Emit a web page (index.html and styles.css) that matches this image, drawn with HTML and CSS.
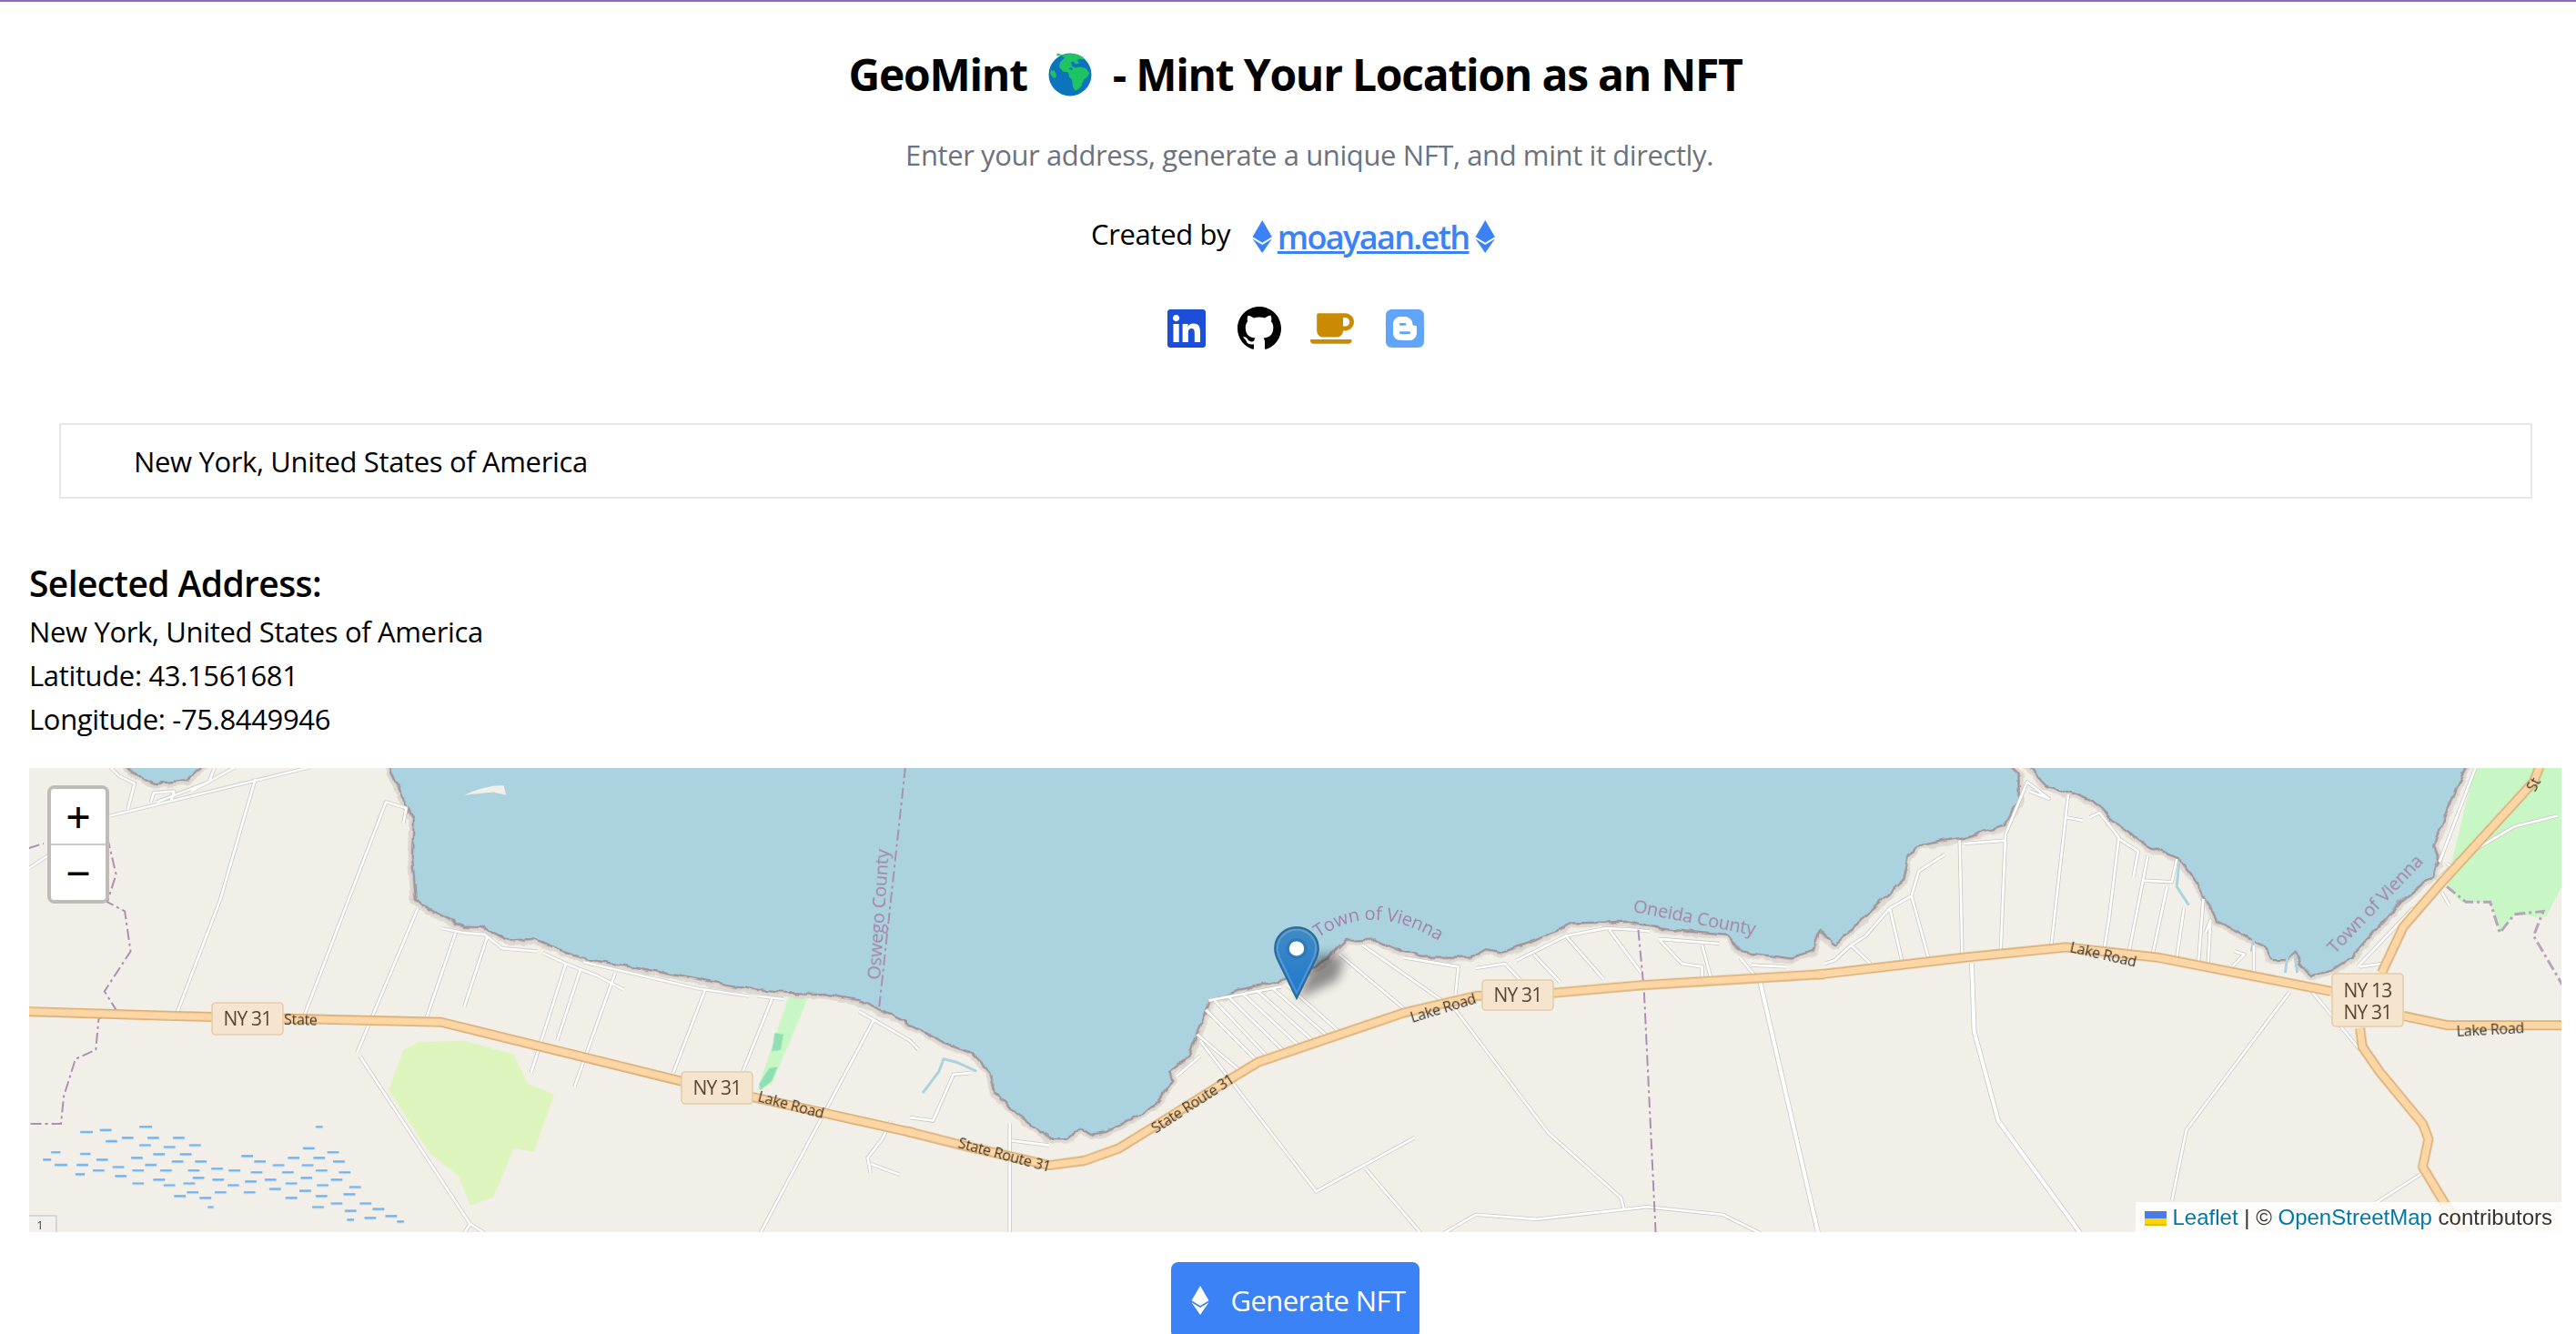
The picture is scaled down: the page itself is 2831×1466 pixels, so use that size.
FILE: index.html
```html
<!DOCTYPE html>
<html lang="en">
<head>
<meta charset="utf-8">
<title>GeoMint</title>
<link rel="stylesheet" href="styles.css">
</head>
<body>
<div class="page">
  <header class="hero">
    <h1 class="title">GeoMint
      <svg class="globe" viewBox="0 0 48 48" aria-hidden="true">
        <circle cx="24" cy="24" r="23.5" fill="#0b74bd"/>
        <path fill="#1ec463" d="M17 2.5c3-1.5 10-2 14-.7 3 1 7 2.6 9 4.7l-3 1-3-1-2 2 2 3-4 1-2-3-3 1 1 4 4 2 5-1 7 2 3 5-2 4-4 3-2 6-4 5-4 1-2-5-1-7-3-3-1-5-6-1-4-5 1-5 5-5-4-3-5 1 1-3z"/>
        <path fill="#1ec463" d="M3 19l4 1 2 4-1 4-3-1-3-4z"/>
        <path fill="#0b74bd" d="M24 16l3 1-1 2-3-1zM38 32l2 1-2 4-1-2z"/>
      </svg>
      - Mint Your Location as an NFT</h1>
    <p class="subtitle">Enter your address, generate a unique NFT, and mint it directly.</p>
    <div class="credit">
      <span class="credit-label">Created by</span>
      <svg class="eth" viewBox="0 0 320 512" aria-hidden="true"><path d="M311.9 260.8L160 353.6 8 260.8 160 0l151.9 260.8zM160 383.4L8 290.6 160 512l152-221.4-152 92.8z"/></svg>
      <a class="credit-link" href="#">moayaan.eth</a>
      <svg class="eth" viewBox="0 0 320 512" aria-hidden="true"><path d="M311.9 260.8L160 353.6 8 260.8 160 0l151.9 260.8zM160 383.4L8 290.6 160 512l152-221.4-152 92.8z"/></svg>
    </div>
    <nav class="socials">
      <svg class="social linkedin" viewBox="0 0 448 512"><path d="M416 32H31.9C14.3 32 0 46.5 0 64.3v383.4C0 465.5 14.3 480 31.9 480H416c17.6 0 32-14.5 32-32.3V64.3c0-17.8-14.4-32.3-32-32.3zM135.4 416H69V202.2h66.5V416zm-33.2-243c-21.3 0-38.5-17.3-38.5-38.5S80.9 96 102.2 96c21.2 0 38.5 17.3 38.5 38.5 0 21.3-17.2 38.5-38.5 38.5zm282.1 243h-66.4V312c0-24.8-.5-56.7-34.5-56.7-34.6 0-39.9 27-39.9 54.9V416h-66.4V202.2h63.7v29.2h.9c8.9-16.8 30.6-34.5 62.9-34.5 67.2 0 79.7 44.3 79.7 101.9V416z"/></svg>
      <svg class="social github" viewBox="0 0 16 16"><path d="M8 0C3.58 0 0 3.58 0 8c0 3.54 2.29 6.53 5.47 7.59.4.07.55-.17.55-.38 0-.19-.01-.82-.01-1.49-2.01.37-2.53-.49-2.69-.94-.09-.23-.48-.94-.82-1.13-.28-.15-.68-.52-.01-.53.63-.01 1.08.58 1.23.82.72 1.21 1.87.87 2.33.66.07-.52.28-.87.51-1.07-1.78-.2-3.64-.89-3.64-3.95 0-.87.31-1.59.82-2.15-.08-.2-.36-1.02.08-2.12 0 0 .67-.21 2.2.82.64-.18 1.32-.27 2-.27.68 0 1.36.09 2 .27 1.53-1.04 2.2-.82 2.2-.82.44 1.1.16 1.92.08 2.12.51.56.82 1.27.82 2.15 0 3.07-1.87 3.75-3.65 3.95.29.25.54.73.54 1.48 0 1.07-.01 1.93-.01 2.2 0 .21.15.46.55.38A8.013 8.013 0 0016 8c0-4.42-3.58-8-8-8z"/></svg>
      <svg class="social coffee" viewBox="0 0 640 512"><path d="M192 384h192c53 0 96-43 96-96h32c70.6 0 128-57.4 128-128S582.6 32 512 32H120c-13.3 0-24 10.7-24 24v232c0 53 43 96 96 96zM512 96c35.3 0 64 28.7 64 64s-28.7 64-64 64h-32V96h32zm47.7 384H48.3c-47.6 0-61-64-36-64h583.3c25 0 11.8 64-35.9 64z"/></svg>
      <svg class="social blogger" viewBox="0 0 448 512"><path d="M162.4 196c4.8-4.9 6.2-5.1 36.4-5.1 27.2 0 28.1.1 32.1 2.1 5.8 2.9 8.3 7 8.3 13.6 0 5.9-2.4 10-7.6 13.4-2.8 1.8-4.5 1.9-31.1 2.1-16.4.1-29.5-.2-31.5-.8-10.3-2.9-14.1-17.7-6.6-25.3zm61.4 94.5c-53.9 0-55.8.2-60.2 4.1-3.5 3.1-5.7 9.4-5.1 13.9.7 4.7 4.8 10.1 9.2 12 2.2 1 14.1 1.7 56.3 1.2l47.9-.6 9.2-1.5c9-5.1 10.5-17.4 3.1-24.4-5.3-4.7-5-4.7-60.4-4.7zm223.4 130.1c-3.5 28.4-23 50.4-51.1 57.5-7.2 1.8-9.7 1.9-172.9 1.8-157.8 0-165.9-.1-172-1.8-8.4-2.2-15.6-5.5-22.3-10-5.6-3.8-13.9-11.8-17-16.4-3.8-5.6-8.2-15.3-10-22C.1 423 0 420.3 0 256.3 0 93.2 0 89.7 1.8 82.6 8.1 57.9 27.7 39 53 33.4c7.3-1.6 332.1-1.9 340-.3 21.2 4.3 37.9 17.1 47.6 36.4 7.7 15.3 7-1.5 7.3 180.6.2 115.8 0 164.5-.7 170.5zm-85.4-185.2c-1.1-5-4.2-9.6-7.7-11.5-1.1-.6-8-1.3-15.5-1.7-12.4-.6-13.8-.8-17.8-3.1-6.2-3.6-7.9-7.6-8-18.3 0-20.4-8.5-39.4-25.3-56.5-12-12.2-25.3-20.5-40.6-25.1-3.6-1.1-11.8-1.5-39.2-1.8-42.9-.5-52.5.4-67.1 6.2-27 10.7-46.3 33.4-53.4 62.4-1.3 5.4-1.6 14.2-1.9 64.3-.4 62.8 0 72.1 4 84.5 9.7 30.7 37.1 53.4 64.6 58.4 9.2 1.7 122.2 2.1 133.7.5 20.1-2.7 35.9-10.8 50.7-25.9 10.7-10.9 17.4-22.8 21.8-38.5 3.2-10.9 2.9-88.4 1.7-93.9z"/></svg>
    </nav>
  </header>

  <div class="search-box">New York, United States of America</div>

  <section class="selected">
    <h2 class="selected-title">Selected Address:</h2>
    <p class="selected-line">New York, United States of America</p>
    <p class="selected-line">Latitude: 43.1561681</p>
    <p class="selected-line">Longitude: -75.8449946</p>
  </section>

  <div class="map">
    <svg class="map-canvas" viewBox="32 845 2783 510">
      <defs>
        <linearGradient id="pin" x1="0" y1="0" x2="0" y2="1">
          <stop offset="0" stop-color="#3f8bc4"/>
          <stop offset="1" stop-color="#1f78cf"/>
        </linearGradient>
        <filter id="soft" x="-50%" y="-50%" width="200%" height="200%"><feGaussianBlur stdDeviation="6"/></filter>
        <filter id="rough" filterUnits="userSpaceOnUse" x="32" y="845" width="2783" height="510">
          <feTurbulence type="fractalNoise" baseFrequency=".07" numOctaves="2" seed="4"/>
          <feDisplacementMap in="SourceGraphic" scale="7" xChannelSelector="R" yChannelSelector="G"/>
        </filter>

        <g id="water">
          <g class="zone-a">
            <path class="nss" d="M670,0 L690,90 L715,180 L712,300 L718,440 L730,460 L760,490 L800,525 L830,525 L880,575 L920,568 L970,605 L1020,635 L1100,660 L1180,690 L1260,720 L1340,740 L1420,745 L1480,765 L1530,810 L1575,850 L1575,0 Z"/>
            <path class="nss" d="M215,0 L240,40 L270,62 L320,50 L345,12 L350,0 Z"/>
          </g>
          <g class="zone-b">
            <path class="nss" d="M-5,845 L30,870 L60,905 L110,940 L140,1000 L148,1070 L190,1140 L240,1215 L270,1215 L295,1180 L310,1200 L340,1190 L380,1150 L420,1110 L450,1030 L445,1000 L480,950 L495,870 L515,770 L560,735 L640,700 L700,660 L750,570 L800,565 L840,600 L880,625 L965,625 L995,600 L1020,610 L1080,570 L1140,515 L1240,510 L1300,535 L1410,555 L1435,610 L1520,630 L1555,605 L1565,540 L1575,535 L1575,0 L-5,0 Z"/>
          </g>
          <g class="zone-c">
            <path class="nss" d="M-5,535 L30,585 L60,540 L110,470 L170,380 L180,300 L200,265 L300,235 L380,200 L410,120 L410,40 L385,0 L-5,0 Z"/>
            <path class="nss" d="M430,0 L470,70 L530,95 L580,130 L600,170 L680,265 L745,305 L790,400 L825,510 L880,555 L925,590 L940,635 L965,635 L985,605 L1000,650 L1020,685 L1060,670 L1100,630 L1200,450 L1270,360 L1280,320 L1270,265 L1340,0 Z"/>
          </g>
        </g>

        <g id="minor">
          <g class="zone-a">
            <path class="nss" d="M190,12 L205,40 L232,65 L220,150 M260,125 L265,95 L300,90 L295,120 M270,125 L360,60 L370,12 M330,90 L405,12 M190,170 L535,12 M305,810 L380,440 L440,50 M525,815 L665,125 L700,145 L695,195 M615,940 L720,470 M620,950 L810,1495 L835,1525 M800,1525 L810,1495 M735,825 L785,550 M760,535 L800,550 L835,555 L865,600 L925,610 M800,790 L840,560 M915,1005 L975,650 M935,615 L975,650 L1030,690 L1075,735 M960,900 L1000,670 M990,1050 L1060,680 M1005,645 L1200,730 L1290,755 M1160,1005 L1215,735 M1280,1000 L1330,765 M1305,755 L1350,765 M1310,1525 L1505,835 M1480,805 L1568,900 M1500,1330 L1495,1280 L1520,1220 L1535,1160 M1500,1300 L1550,1335 M50,340 L90,290"/>
          </g>
          <g class="zone-b">
            <path class="nss" d="M0,1150 L40,1160 L75,1010 L105,1005 M0,900 L15,930 M525,770 L620,960 M550,760 L650,945 M575,750 L675,925 M600,740 L700,910 M625,730 L725,895 M650,720 L745,880 M510,800 L600,970 M495,880 L570,1000 M515,770 L640,725 M500,900 L700,1390 L870,1215 M785,1315 L880,1525 M740,620 L860,810 M780,590 L940,800 L1100,1200 L1225,1410 L1230,1445 M920,1525 L975,1465 L1080,1480 L1270,1440 L1400,1465 L1465,1525 M172,1525 L172,1170 M175,1225 L240,1240 M460,1015 L500,950 M850,630 L945,660 L940,750 M975,665 L1025,650 L1060,720 M1045,640 L1130,560 L1200,535 L1250,540 L1275,545 M1130,560 L1195,700 M1075,620 L1120,710 M1205,540 L1260,680 M1290,570 L1395,585 M1290,570 L1330,650 L1365,660 L1365,700 M1365,590 L1380,695 M1430,630 L1465,710 M1450,655 L1510,660"/>
            <path class="nss wide" d="M1465,710 L1565,1525"/>
          </g>
          <g class="zone-c">
            <path class="nss" d="M295,620 L290,250 M300,260 L385,250 M375,610 L385,230 L430,60 L475,115 L435,90 M480,590 L515,100 M510,175 L545,185 M560,175 L580,160 L620,240 L600,500 L590,600 M620,245 L660,285 L650,370 M680,300 L670,380 L730,385 L740,310 M670,380 L640,620 M720,400 L690,620 M755,470 L740,630 M795,440 L785,650 M800,550 L810,510 L805,650 M860,610 L880,620 L855,660 M900,590 L900,680 M105,650 L65,590 L30,640 L10,650 M170,640 L145,470 L190,430 L225,630 M145,470 L95,560 L65,590 M190,430 L205,350 L260,295 M975,740 L760,1190 L730,1420 M1115,660 L1230,470 M1120,660 L1165,650 M1285,320 L1360,12 M1300,325 L1310,335 L1285,370 M1290,420 L1305,460 M1020,740 L1120,930 M1245,1335 L1150,1430 M1315,320 L1440,205 L1530,170"/>
            <path class="nss wide" d="M315,650 L320,870 L370,1160 L540,1525"/>
          </g>
        </g>

        <g id="major">
          <g class="zone-a">
            <path class="nss" d="M40,805 L300,820 L760,840 L1170,1030 L1575,1200"/>
          </g>
          <g class="zone-b">
            <path class="nss" d="M-5,1195 L90,1240 L240,1305 L300,1290 L360,1250 L420,1180 L530,1050 L600,970 L850,810 L975,755 L1110,745 L1260,720 L1575,684"/>
          </g>
          <g class="zone-c">
            <path class="nss" d="M-5,686 L300,630 L510,597 L700,630 L1060,740 M1210,820 L1300,850 L1545,850 M1165,680 L1210,530 L1290,385 L1480,60 L1495,0 M1120,860 L1125,920 L1160,1000 L1250,1170 L1262,1220 L1250,1310 L1300,1440 L1345,1540"/>
          </g>
        </g>

        <path id="vienna-curve" d="M1449 1032 Q1510 988 1589 1040"/>
      </defs>

      <rect class="land" x="32" y="845" width="2783" height="510"/>

      <g class="tiles">
        <g class="zone-a">
          <path class="park" d="M695,930 L720,905 L800,900 L885,945 L910,1040 L955,1075 L920,1260 L885,1250 L850,1410 L810,1435 L790,1340 L740,1265 L670,1060 Z"/>
          <path class="forest" d="M1360,750 L1395,750 L1330,1040 L1305,1060 Z"/>
          <path class="forest-dark" d="M1335,875 L1350,880 L1345,930 L1330,935 Z M1325,990 L1340,985 L1330,1030 L1310,1062 L1308,1040 Z"/>
        </g>
        <g class="zone-c">
          <path class="forest" d="M1360,0 L1545,0 L1545,380 L1505,500 L1440,490 L1410,550 L1390,450 L1330,450 L1300,400 L1310,320 Z"/>
        </g>

        <g filter="url(#rough)">
          <use href="#water" class="shore-halo"/>
          <use href="#water" class="shore-line"/>
          <use href="#water" class="water-fill"/>
        </g>

        <g class="zone-a"><path class="island nss" d="M800,103 C820,85 840,72 868,72 L872,103 L850,93 Z"/></g>
        <g class="zone-b"><path class="inlet nss" d="M22,1070 L50,1000 L58,960 L80,970 L115,1000"/></g>
        <g class="zone-c"><path class="inlet nss" d="M745,320 L740,400 L765,460 M900,570 L895,610 M970,620 L965,680 M985,620 L990,680"/></g>

        <use href="#minor" class="minor-casing"/>
        <use href="#minor" class="minor-fill"/>

        <g class="zone-a"><path class="boundary nss" d="M50,275 L75,260 M185,240 L200,360 L185,450 L215,480 L225,610 L180,740 L200,800 L170,830 L165,930 L130,960 L110,1080 L105,1170 L50,1170 M1560,12 L1515,790"/></g>
        <g class="zone-b"><path class="boundary nss" d="M1255,540 L1265,740 L1285,1525"/></g>
        <g class="zone-c"><path class="boundary-thick nss" d="M1300,400 L1340,450 L1390,450 L1410,550 L1440,490 L1500,480 L1480,560 L1540,720"/></g>

        <use href="#major" class="major-casing"/>
        <use href="#major" class="major-fill"/>

        <g class="zone-a"><path class="wet nss" d="M138,1197h22M172,1191h20M240,1180h22M182,1227h20M210,1216h20M254,1216h20M298,1216h20M240,1240h20M282,1246h20M326,1240h20M88,1263h16M138,1268h18M166,1287h20M74,1287h14M94,1304h22M132,1304h20M194,1311h20M226,1281h20M250,1304h20M264,1269h20M310,1269h20M296,1293h20M336,1293h20M160,1322h20M130,1334h16M198,1340h20M228,1322h20M276,1322h20M324,1322h20M364,1316h20M394,1322h20M432,1328h20M486,1328h20M544,1322h20M584,1328h20M416,1275h20M438,1293h20M470,1305h20M520,1305h20M496,1281h20M540,1281h20M564,1263h20M574,1293h20M522,1250h20M544,1180h12M228,1364h20M264,1352h20M282,1370h20M316,1364h20M332,1346h20M366,1352h20M392,1370h20M422,1358h20M456,1352h20M492,1364h20M518,1346h20M570,1352h20M546,1370h20M602,1376h20M464,1382h20M516,1388h20M544,1405h20M592,1399h20M420,1393h20M370,1393h20M322,1393h20M300,1405h20M344,1411h20M492,1411h20M358,1441h10M538,1441h20M570,1429h20M620,1429h20M594,1453h20M642,1447h20M628,1476h20M664,1470h20M598,1482h12M684,1488h12"/></g>
      </g>

      <rect class="scale-stub" x="24" y="1337" width="38" height="30" rx="2"/>
      <text class="stub-text" x="44" y="1352">1</text>

      <g class="labels">
        <text class="road" transform="translate(312 1127) rotate(1)">State</text>
        <text class="road" transform="translate(832 1211) rotate(15)">Lake Road</text>
        <text class="road" transform="translate(1052 1262) rotate(15)">State Route 31</text>
        <text class="road" transform="translate(1270 1247) rotate(-33)">State Route 31</text>
        <text class="road" transform="translate(1552 1125) rotate(-17)">Lake Road</text>
        <text class="road" transform="translate(2274 1047) rotate(13)">Lake Road</text>
        <text class="road" transform="translate(2700 1140) rotate(-3)">Lake Road</text>
        <text class="road" transform="translate(2786 872) rotate(-62)">St</text>

        <text class="admin"><textPath href="#vienna-curve">Town of Vienna</textPath></text>
        <text class="admin" transform="translate(1794 1003) rotate(11)">Oneida County</text>
        <text class="admin" transform="translate(967 1078) rotate(-86)">Oswego County</text>
        <text class="admin" transform="translate(2566 1050) rotate(-46)">Town of Vienna</text>

        <rect class="shield" x="233" y="1103" width="78" height="35" rx="4"/>
        <text class="shield-text" x="272" y="1128">NY 31</text>
        <rect class="shield" x="749" y="1179" width="78" height="35" rx="4"/>
        <text class="shield-text" x="788" y="1204">NY 31</text>
        <rect class="shield" x="1629" y="1078" width="78" height="33" rx="4"/>
        <text class="shield-text" x="1668" y="1102">NY 31</text>
        <rect class="shield" x="2563" y="1071" width="78" height="58" rx="4"/>
        <text class="shield-text" x="2602" y="1097">NY 13</text>
        <text class="shield-text" x="2602" y="1121">NY 31</text>
      </g>

      <path class="pin-shadow" d="M1425 1099 L1448 1050 L1478 1052 L1470 1078 Z" filter="url(#soft)"/>
      <g transform="translate(1400 1019) scale(2 1.951)">
        <path d="M12.5 .6C5.9 .6 .6 5.8 .6 12.5c0 2.6 1 5.3 2.2 7.7L12.5 40.4l9.7-20.2c1.2-2.4 2.2-5.1 2.2-7.7C24.4 5.8 19.1 .6 12.5 .6z" fill="url(#pin)" stroke="#2e6c97" stroke-width="1.1"/>
        <path d="M12.5 1.9C6.7 1.9 1.900 6.6 1.900 12.5c0 2.3 .9 4.7 2 7l8.6 18 8.6-18c1.1-2.3 2-4.7 2-7 0-5.900-4.800-10.600-10.600-10.600z" fill="none" stroke="#fff" stroke-opacity=".18" stroke-width="1"/>
        <circle cx="12.500" cy="12.500" r="5.800" fill="#2a6da3" fill-opacity=".45"/>
        <circle cx="12.500" cy="12.500" r="4.100" fill="#fff"/>
      </g>
    </svg>

    <div class="zoom-control">
      <a class="zoom-btn zoom-in" href="#">+</a>
      <a class="zoom-btn" href="#">−</a>
    </div>

    <div class="attribution"><svg class="flag" viewBox="0 0 12 8"><path fill="#4C7BE1" d="M0 0h12v4H0z"/><path fill="#FFD500" d="M0 4h12v3H0z"/><path fill="#E0BC00" d="M0 7h12v1H0z"/></svg><a class="attr-link" href="#">Leaflet</a> | © <a class="attr-link" href="#">OpenStreetMap</a> contributors</div>
  </div>

  <div class="actions">
    <button class="generate" type="button">
      <svg class="generate-eth" viewBox="0 0 320 512" aria-hidden="true"><path d="M311.9 260.8L160 353.6 8 260.8 160 0l151.9 260.8zM160 383.4L8 290.6 160 512l152-221.4-152 92.8z"/></svg>
      <span>Generate NFT</span>
    </button>
  </div>
</div>
</body>
</html>
```
FILE: styles.css
```css
html, body { margin: 0; padding: 0; height: 100%; overflow: hidden; background: #fff; }
body {
  font-family: "Open Sans", "Noto Sans", sans-serif;
  color: #000;
  border-top: 2px solid #9168b8;
  box-sizing: border-box;
}
.page { padding: 0 16px 0 32px; }

.hero { display: flex; flex-direction: column; align-items: center; }
.title {
  margin: 44px 0 0;
  font-size: 48px;
  line-height: 72px;
  font-weight: 700;
  letter-spacing: -1.25px;
  white-space: nowrap;
  display: flex;
  align-items: center;
  gap: 23px;
}
.globe { width: 48px; height: 48px; }
.subtitle {
  margin: 28px 0 0;
  padding-left: 31px;
  font-size: 31px;
  line-height: 48px;
  letter-spacing: -.4px;
  color: #6b7280;
}
.credit { margin-top: 39px; padding-right: 4px; display: flex; align-items: center; height: 54px; font-size: 31px; letter-spacing: -.35px; }
.credit-label { margin-right: 24px; position: relative; top: -3px; }
.eth { width: 22.500px; height: 36px; fill: #3b82f6; }
.credit-link {
  margin: 0 7px 0 5px;
  font-size: 36px;
  font-weight: 600;
  color: #3b82f6;
  text-decoration: underline;
  letter-spacing: -1.650px;
}
.socials { margin-top: 50px; display: flex; align-items: center; gap: 32px; height: 48px; }
.social { width: 48px; height: 48px; }
.linkedin { fill: #1d4ed8; }
.github { fill: #000; }
.coffee { fill: #ca8a04; }
.blogger { fill: #60a5fa; }

.search-box {
  margin: 80px 32px 0 33px;
  border: 2px solid #e5e7eb;
  box-sizing: border-box;
  height: 83px;
  padding-left: 80px;
  display: flex;
  align-items: center;
  font-size: 31px;
  letter-spacing: -.35px;
}

.selected { margin-top: 64px; }
.selected-title { margin: 0; font-size: 39px; line-height: 58px; font-weight: 600; letter-spacing: -.6px; }
.selected-line { margin: 0; font-size: 31px; line-height: 48px; letter-spacing: -.35px; }

.map { position: relative; margin-top: 30px; height: 510px; overflow: hidden; background: #f2efe9; }
.map-canvas { display: block; width: 100%; height: 510px; }

.land { fill: #f2efe9; }
.tiles { filter: blur(.4px); }
.zone-a { transform: translate(0, 840px) scale(.6378, .3384); }
.zone-b { transform: translate(1000px, 840px) scale(.6378, .3384); }
.zone-c { transform: translate(2000px, 840px) scale(.53, .3384); }
.nss { vector-effect: non-scaling-stroke; }
.wide { stroke-width: calc(var(--road-w) + 1.4px); }

.park { fill: #def4bd; }
.forest { fill: #c8f7c5; }
.forest-dark { fill: #8fdfb5; }
.shore-halo { fill: none; stroke: #ded8d2; stroke-width: 13; stroke-linejoin: round; }
.shore-line { fill: none; stroke: #a0959a; stroke-width: 5; stroke-linejoin: round; }
.water-fill { fill: #aad3df; stroke: none; }
.island { fill: #f2efe9; }
.inlet { fill: none; stroke: #aad3df; stroke-width: 3; }
.minor-casing { --road-w: 4.2px; fill: none; stroke: #cbc8c2; stroke-width: var(--road-w); stroke-linejoin: round; }
.minor-fill { --road-w: 2.6px; fill: none; stroke: #fff; stroke-width: var(--road-w); stroke-linejoin: round; }
.boundary { fill: none; stroke: #ad8fb0; stroke-width: 2; stroke-dasharray: 12 4 3 4; }
.boundary-thick { fill: none; stroke: #b7a3bb; stroke-width: 3; stroke-dasharray: 12 4 3 4; }
.major-casing { fill: none; stroke: #dcb077; stroke-width: 11; stroke-linejoin: round; }
.major-fill { fill: none; stroke: #fcd6a4; stroke-width: 7.500; stroke-linejoin: round; }
.wet { fill: none; stroke: #6cb2f2; stroke-width: 2.400; }

.scale-stub { fill: #f2f1ee; stroke: #cfcdc8; stroke-width: 1.500; }
.stub-text { font: 13px "Open Sans", sans-serif; fill: #444; text-anchor: middle; }

.road { font: 16px "Open Sans", sans-serif; letter-spacing: -.3px; fill: #3f3326; }
.admin { font: 20px "Open Sans", sans-serif; letter-spacing: -.2px; fill: #a680a8; }
.shield { fill: #f5e4ce; stroke: #e3cda9; stroke-width: 1.600; }
.shield-text { font: 21px "Open Sans", sans-serif; letter-spacing: -.8px; fill: #58462f; text-anchor: middle; }
.pin-shadow { fill: rgba(0, 0, 0, .42); }

.zoom-control {
  position: absolute;
  left: 20px;
  top: 19px;
  width: 60px;
  border: 4px solid #bdbcb7;
  border-radius: 8px;
  background: #fff;
  display: flex;
  flex-direction: column;
  overflow: hidden;
}
.zoom-btn {
  height: 60px;
  display: flex;
  align-items: center;
  justify-content: center;
  font: 400 44px/60px "DejaVu Sans Mono", monospace;
  color: #000;
  text-decoration: none;
  background: #fff;
}
.zoom-in { border-bottom: 2px solid #ccc; }

.attribution {
  position: absolute;
  right: 0;
  bottom: 0;
  height: 33px;
  padding: 0 10px;
  white-space: nowrap;
  font: 24px/33px "Liberation Sans", Arial, sans-serif;
  color: #333;
  background: rgba(255, 255, 255, .8);
}
.attr-link { color: #0078a8; text-decoration: none; }
.flag { width: 24px; height: 16px; margin-right: 7px; vertical-align: -1px; }

.actions { margin-top: 33px; display: flex; justify-content: center; }
.generate {
  display: flex;
  align-items: center;
  gap: 24px;
  height: 84px;
  padding: 0 16px 0 22px;
  border: 0;
  border-radius: 8px;
  background: #3b82f6;
  color: #fff;
  font-family: "Open Sans", sans-serif;
  font-size: 31px;
  letter-spacing: -.6px;
}
.generate-eth { width: 20px; height: 32px; fill: #fff; }
```
